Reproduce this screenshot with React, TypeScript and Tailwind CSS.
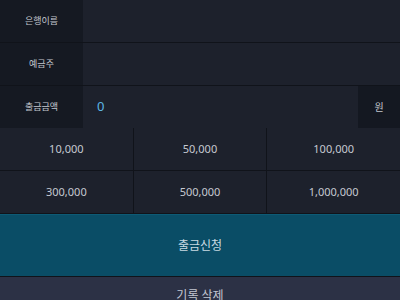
const amounts = ["10,000", "50,000", "100,000", "300,000", "500,000", "1,000,000"];

function Row({ label, children }: { label: string; children?: React.ReactNode }) {
  return (
    <div className="flex h-[42px]">
      <div className="w-[83px] shrink-0 bg-[#151922] flex items-center justify-center text-[9px] text-[#c3c7cf]">
        {label}
      </div>
      <div className="flex-1 bg-[#1d212c] flex items-center">{children}</div>
    </div>
  );
}

export default function App() {
  return (
    <div
      className="w-[400px] h-[300px] overflow-hidden bg-[#10131a]"
      style={{ fontFamily: '"Noto Sans", "Noto Sans CJK KR", sans-serif' }}
    >
      <div className="flex flex-col gap-px bg-[#10131a]">
        <Row label="은행이름" />
        <Row label="예금주" />
        <div className="flex h-[42px]">
          <div className="w-[83px] shrink-0 bg-[#151922] flex items-center justify-center text-[9px] text-[#c3c7cf]">
            출금금액
          </div>
          <div className="flex-1 bg-[#1d212c] flex items-center pl-[14px] text-[13px] text-[#5cb6e4]">0</div>
          <div className="w-[42px] bg-[#141821] flex items-center justify-center text-[10px] text-[#c3c7cf]">원</div>
        </div>
      </div>
      <div className="grid grid-cols-3 gap-px bg-[#10131a]">
        {amounts.map((a) => (
          <button
            key={a}
            className="h-[42px] bg-[#1d212c] flex items-center justify-center text-[11px] text-[#c5c9d1]"
          >
            {a}
          </button>
        ))}
      </div>
      <button className="mt-px w-full h-[62px] bg-[#0a4d66] border-t border-[#0d5a75] flex items-center justify-center text-[12px] text-[#c9dbe3]">
        출금신청
      </button>
      <button className="mt-px w-full h-[44px] bg-[#2c3145] flex items-start justify-center pt-[10px] text-[12px] text-[#c3c7d2]">
        기록 삭제
      </button>
    </div>
  );
}
